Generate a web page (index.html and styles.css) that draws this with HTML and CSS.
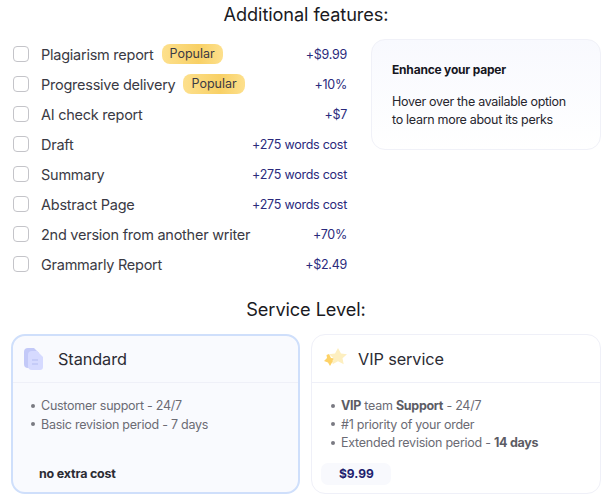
FILE: index.html
```html
<!DOCTYPE html>
<html lang="en">
<head>
<meta charset="utf-8">
<title>Additional features</title>
<link rel="stylesheet" href="styles.css">
</head>
<body>
<main class="page">
  <h2 class="section-title">Additional features:</h2>
  <section class="features">
    <ul class="feature-list">
      <li class="feature"><span class="check"></span><span class="name">Plagiarism report</span><span class="badge">Popular</span><span class="price">+$9.99</span></li>
      <li class="feature"><span class="check"></span><span class="name">Progressive delivery</span><span class="badge">Popular</span><span class="price">+10%</span></li>
      <li class="feature"><span class="check"></span><span class="name">AI check report</span><span class="price">+$7</span></li>
      <li class="feature"><span class="check"></span><span class="name">Draft</span><span class="price">+275 words cost</span></li>
      <li class="feature"><span class="check"></span><span class="name">Summary</span><span class="price">+275 words cost</span></li>
      <li class="feature"><span class="check"></span><span class="name">Abstract Page</span><span class="price">+275 words cost</span></li>
      <li class="feature"><span class="check"></span><span class="name">2nd version from another writer</span><span class="price">+70%</span></li>
      <li class="feature"><span class="check"></span><span class="name">Grammarly Report</span><span class="price">+$2.49</span></li>
    </ul>
    <aside class="hint">
      <h3 class="hint-title">Enhance your paper</h3>
      <p class="hint-text">Hover over the available option<br>to learn more about its perks</p>
    </aside>
  </section>
  <h2 class="section-title">Service Level:</h2>
  <section class="levels">
    <article class="level level-active">
      <header class="level-head">
        <svg class="level-icon" width="22" height="24" viewBox="0 0 22 24" aria-hidden="true">
          <path d="M5 1h6l5 5v11a4 4 0 0 1-4 4H5a4 4 0 0 1-4-4V5a4 4 0 0 1 4-4z" fill="#c3c9f8"/>
          <path d="M9 4h5l6 6v10a3 3 0 0 1-3 3H9a4 4 0 0 1-4-4V8a4 4 0 0 1 4-4z" fill="#d6daff"/>
          <path d="M9 13h6M9 17h6" stroke="#c0c6f6" stroke-width="1.4"/>
        </svg>
        <h3 class="level-name">Standard</h3>
      </header>
      <div class="level-body">
        <ul class="perks">
          <li>Customer support - 24/7</li>
          <li>Basic revision period - 7 days</li>
        </ul>
        <div class="cost cost-plain">no extra cost</div>
      </div>
    </article>
    <article class="level">
      <header class="level-head">
        <svg class="level-icon" width="26" height="24" viewBox="0 0 26 24" aria-hidden="true">
          <path d="M7 7l2 4 4 .6-3 2.6 4 .3-4 1-2 3.5-2-3.5-4-1.5 3-3-.5-3z" fill="#fdd267"/>
          <path d="M16 1l3 5.5 6 .8-4.5 4 1.2 6-5.700-3-5.500 3 1-6-4.500-4 6-.8z" fill="#fdefc0"/>
        </svg>
        <h3 class="level-name">VIP service</h3>
      </header>
      <div class="level-body">
        <ul class="perks">
          <li><b>VIP</b> team <b>Support</b> - 24/7</li>
          <li>#1 priority of your order</li>
          <li>Extended revision period - <b>14 days</b></li>
        </ul>
        <div class="cost cost-paid">$9.99</div>
      </div>
    </article>
  </section>
</main>
</body>
</html>
```
FILE: styles.css
```css
* { box-sizing: border-box; }
html, body { margin: 0; padding: 0; background: #fff; }
body { font-family: Inter, "Liberation Sans", sans-serif; color: #30303a; }
.page { width: 609px; height: 500px; overflow: hidden; padding: 2px 8px 0 11px; }
.section-title {
  margin: 0;
  height: 24px;
  font-size: 18.2px;
  line-height: 24px;
  font-weight: 400;
  color: #1a1a22;
  text-align: center;
  letter-spacing: -0.1px;
}
.features { display: flex; justify-content: space-between; margin-top: 13px; height: 258px; align-items: flex-start; }
.feature-list { list-style: none; margin: 0; padding: 0; width: 336px; }
.feature { display: flex; align-items: center; height: 30px; padding-left: 2px; }
.check { width: 16px; height: 16px; border: 1px solid #c4c4c9; border-radius: 4px; background: #fff; margin-right: 12px; flex: none; }
.name { padding-top: 1px; font-size: 14.5px; letter-spacing: -0.25px; color: #3a3a44; white-space: nowrap; }
.badge {
  margin-left: 8px;
  height: 20px;
  padding: 0 8px;
  border-radius: 8px;
  background: linear-gradient(90deg, #fde08d, #f8d065 60%, #fde08d);
  font-size: 12.5px;
  line-height: 20px;
  color: #3a3a44;
}
.price { margin-left: auto; padding-top: 1px; font-size: 12.5px; letter-spacing: -0.25px; color: #2a2a7c; white-space: nowrap; }
.hint {
  width: 230px;
  height: 111px;
  border: 1px solid #f0f1f8;
  border-radius: 14px;
  background: linear-gradient(180deg, #f8f9fe, #ffffff);
  padding: 22px 20px 0;
}
.hint-title { margin: 0; font-size: 12px; line-height: 16px; font-weight: 700; letter-spacing: -0.2px; color: #16161e; }
.hint-text { margin: 15px 0 0; font-size: 12.5px; line-height: 18px; letter-spacing: -0.3px; color: #26262e; }
.levels { display: flex; gap: 11px; margin-top: 13px; }
.level { width: 290px; height: 160px; border: 1px solid #eff0f8; border-radius: 14px; background: #fff; display: flex; flex-direction: column; }
.level-active { width: 289px; border: 2px solid #cfdffb; background: #f9fafe; }
.level-head { display: flex; align-items: center; height: 48px; padding-left: 10px; border-bottom: 1px solid #eff0f8; flex: none; }
.level-active .level-head { height: 47px; }
.level-icon { flex: none; }
.level-name { margin: 0 0 0 10px; font-size: 16.3px; font-weight: 400; letter-spacing: -0.1px; color: #2c2c34; }
.level-active .level-name { margin-left: 13px; }
.level-body { flex: 1; display: flex; flex-direction: column; }
.perks { list-style: none; margin: 14px 0 0; padding: 0 0 0 29px; font-size: 12.5px; line-height: 18.7px; letter-spacing: -0.25px; color: #6b6b74; }
.perks li::before { content: ""; display: inline-block; width: 4px; height: 4px; margin: 0 6px 2px -10px; border-radius: 50%; background: #7a7a82; vertical-align: middle; }
.perks b { font-weight: 700; color: #5c5c64; letter-spacing: -0.3px; }
.level-active .perks { padding-left: 28px; }
.cost { font-size: 12.5px; font-weight: 700; }
.cost-plain { margin: auto 0 11px 26px; color: #2c2c34; letter-spacing: -0.2px; }
.cost-paid { margin: auto 0 8px 9px; width: 70px; height: 22px; line-height: 22px; padding-left: 18px; border-radius: 7px; background: #f8f9fd; color: #1f1f6f; font-size: 12px; }
```
